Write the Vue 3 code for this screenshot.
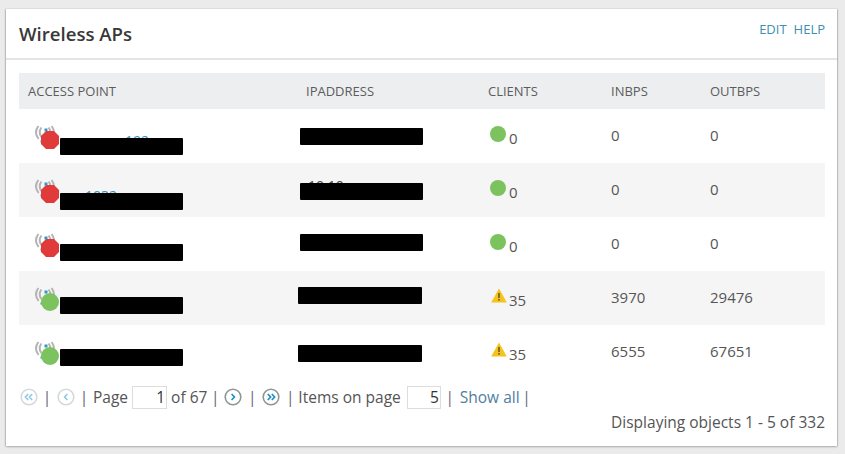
<script setup>
const rows = [
  { status: 'down', client: 'ok', clients: 0, inb: 0, outb: 0, alt: false, apTop: 29, ipTop: 19, ipLeft: -6, ipWidth: 123, apText: '192', apTextLeft: 65, ipText: '' },
  { status: 'down', client: 'ok', clients: 0, inb: 0, outb: 0, alt: true, apTop: 30, ipTop: 20, ipLeft: -6, ipWidth: 123, apText: '1032', apTextLeft: 25, ipText: '10.10' },
  { status: 'down', client: 'ok', clients: 0, inb: 0, outb: 0, alt: false, apTop: 27, ipTop: 17, ipLeft: -6, ipWidth: 123, apText: '', apTextLeft: 0, ipText: '' },
  { status: 'up', client: 'warn', clients: 35, inb: 3970, outb: 29476, alt: true, apTop: 26, ipTop: 16, ipLeft: -8, ipWidth: 124, apText: '', apTextLeft: 0, ipText: '' },
  { status: 'up', client: 'warn', clients: 35, inb: 6555, outb: 67651, alt: false, apTop: 24, ipTop: 20, ipLeft: -8, ipWidth: 124, apText: '', apTextLeft: 0, ipText: '' }
]
</script>

<template>
  <div class="page">
    <section class="card">
      <header class="head">
        <h1>Wireless APs</h1>
        <nav class="links"><a>EDIT</a><a>HELP</a></nav>
      </header>
      <div class="body">
        <div class="grid thead">
          <div>ACCESS POINT</div>
          <div>IPADDRESS</div>
          <div>CLIENTS</div>
          <div>INBPS</div>
          <div>OUTBPS</div>
        </div>
        <div v-for="(r, i) in rows" :key="i" class="grid row" :class="{ alt: r.alt }">
          <div class="cell ap">
            <svg class="apicon" width="24" height="25" viewBox="0 0 24 25">
              <rect x="9.5" y="3.5" width="3" height="3" fill="#2f97c9" />
              <rect x="5.5" y="15.5" width="2" height="2" fill="#2f97c9" />
              <g fill="none" stroke="#b4b4b4" stroke-width="2">
                <path d="M3.4 1 C0.4 5 0.4 10 3.6 14" />
                <path d="M6.4 2.5 C4.2 5.5 4.2 9 6.4 12" />
                <path d="M16.6 1 C19.6 5 19.6 10 16.4 14" />
                <path d="M13.6 2.5 C15.8 5.5 15.8 9 13.6 12" />
              </g>
              <polygon v-if="r.status === 'down'" points="11,6 19,6 24,11 24,19 19,24 11,24 6,19 6,11" fill="#e03a3a" />
              <circle v-else cx="15" cy="15" r="9" fill="#7cc35f" />
            </svg>
            <span v-if="r.apText" class="aptext" :style="{ left: r.apTextLeft + 32 + 'px', top: r.apTop - 5 + 'px' }">{{ r.apText }}</span>
            <span class="redact apbar" :style="{ top: r.apTop + 'px' }"></span>
          </div>
          <div class="cell ip">
            <span v-if="r.ipText" class="iptext" :style="{ top: r.ipTop - 5 + 'px' }">{{ r.ipText }}</span>
            <span class="redact" :style="{ top: r.ipTop + 'px', left: r.ipLeft + 'px', width: r.ipWidth + 'px' }"></span>
          </div>
          <div class="clients">
            <svg v-if="r.client === 'ok'" class="okicon" width="16" height="16" viewBox="0 0 16 16"><circle cx="8" cy="8" r="8" fill="#7cc35f" /></svg>
            <svg v-else class="warnicon" width="16" height="15" viewBox="0 0 16 15">
              <path d="M8 0.5 L15.8 14.5 H0.2 Z" fill="#f6c21c" />
              <rect x="7.2" y="5" width="1.6" height="5" fill="#6b5a1e" />
              <rect x="7.2" y="11" width="1.6" height="1.6" fill="#6b5a1e" />
            </svg>
            <span class="cnum">{{ r.clients }}</span>
          </div>
          <div class="cell">{{ r.inb }}</div>
          <div class="cell">{{ r.outb }}</div>
        </div>
        <div class="pager">
          <span class="pg"><svg width="18" height="18" viewBox="0 0 18 18"><circle cx="9" cy="9" r="7.8" fill="none" stroke="#d4d8da" stroke-width="1.6"/><path d="M8.2 6 L5.4 9 L8.2 12 M12.2 6 L9.4 9 L12.2 12" fill="none" stroke="#8fc9e2" stroke-width="1.6"/></svg></span>
          <span class="sep ml4 mr5">|</span>
          <span class="pg"><svg width="18" height="18" viewBox="0 0 18 18"><circle cx="9" cy="9" r="7.8" fill="none" stroke="#d4d8da" stroke-width="1.6"/><path d="M10.4 6 L7.6 9 L10.4 12" fill="none" stroke="#8fc9e2" stroke-width="1.6"/></svg></span>
          <span class="sep ml4 mr4">|</span>
          <span>Page</span>
          <span class="box">1</span>
          <span>of 67</span>
          <span class="sep ml3 mr4">|</span>
          <span class="pg"><svg width="18" height="18" viewBox="0 0 18 18"><circle cx="9" cy="9" r="7.8" fill="none" stroke="#8f9496" stroke-width="1.6"/><path d="M7.6 6 L10.4 9 L7.6 12" fill="none" stroke="#1f8fc0" stroke-width="1.7"/></svg></span>
          <span class="sep ml5 mr5">|</span>
          <span class="pg"><svg width="18" height="18" viewBox="0 0 18 18"><circle cx="9" cy="9" r="7.8" fill="none" stroke="#8f9496" stroke-width="1.6"/><path d="M5.8 6 L8.6 9 L5.8 12 M9.8 6 L12.6 9 L9.8 12" fill="none" stroke="#1f8fc0" stroke-width="1.7"/></svg></span>
          <span class="sep ml5 mr3">|</span>
          <span>Items on page</span>
          <span class="box items">5</span>
          <span class="sep ml4 mr5">|</span>
          <a class="showall">Show all</a>
          <span class="sep ml2">|</span>
        </div>
        <div class="count">Displaying objects 1 - 5 of 332</div>
      </div>
    </section>
  </div>
</template>

<style scoped>
.page {
  width: 845px;
  height: 454px;
  box-sizing: border-box;
  padding: 9px 8px 8px 6px;
  background: #ebebeb;
  font-family: "Open Sans", sans-serif;
  color: #555;
  font-size: 15px;
  overflow: hidden;
}
.card {
  height: 437px;
  box-sizing: border-box;
  background: #fff;
  box-shadow: 0 1px 2px rgba(0,0,0,.25), -1px 0 1px rgba(0,0,0,.12), 1px 0 1px rgba(0,0,0,.12);
}
.head {
  height: 51px;
  box-sizing: border-box;
  border-bottom: 2px solid #e4e4e4;
  display: flex;
  justify-content: space-between;
  padding: 0 12px 0 13px;
}
h1 {
  margin: 12px 0 0;
  font-size: 18.6px;
  line-height: 26px;
  font-weight: 600;
  color: #383838;
}
.links {
  display: flex;
  gap: 7px;
  margin-top: 12px;
  font-size: 13px;
  line-height: 16px;
  color: #3f8fae;
}
.body { padding: 13px 12px 0 13px; }
.grid {
  display: grid;
  grid-template-columns: 278px 182px 123px 99px 115px;
  padding-left: 9px;
}
.thead {
  height: 36px;
  align-items: center;
  background: #edeef0;
  font-size: 13px;
  color: #5c5c5c;
}
.row { height: 54px; }
.alt { background: #f5f5f5; }
.cell {
  position: relative;
  line-height: 52px;
}
.apicon {
  position: absolute;
  left: 7px;
  top: 16px;
}
.redact {
  position: absolute;
  background: #000;
  border-radius: 1px;
  height: 16.5px;
}
.apbar { left: 32px; width: 123px; }
.aptext {
  position: absolute;
  font-size: 14px;
  line-height: 16px;
  color: #3a8fb8;
}
.iptext {
  position: absolute;
  left: 2px;
  font-size: 14px;
  line-height: 16px;
  color: #444;
}
.clients {
  display: flex;
  align-items: flex-start;
  padding-top: 17px;
}
.okicon { flex: none; margin-left: 2px; }
.warnicon { flex: none; margin-left: 3px; }
.cnum { margin-left: 3px; line-height: 22px; margin-top: 1px; }
.warnicon + .cnum { margin-left: 2px; }
.pager {
  display: flex;
  align-items: center;
  height: 18px;
  margin-top: 9px;
  padding-left: 1px;
  font-size: 15.5px;
  line-height: 18px;
}
.pg { display: flex; }
.sep { width: 10px; text-align: center; color: #667; }
.ml2 { margin-left: 2px; }
.ml3 { margin-left: 3px; }
.ml4 { margin-left: 4px; }
.ml5 { margin-left: 5px; }
.mr3 { margin-right: 3px; }
.mr4 { margin-right: 4px; }
.mr5 { margin-right: 5px; }
.box {
  box-sizing: border-box;
  width: 35px;
  height: 23px;
  line-height: 21px;
  border: 1px solid #ddd;
  text-align: right;
  padding-right: 1px;
  margin: 0 4px;
  color: #333;
}
.items { width: 34px; margin-left: 6px; margin-right: 0; }
.showall { color: #4f7ea0; }
.count {
  text-align: right;
  margin-top: 6px;
  font-size: 15.5px;
  line-height: 20px;
}
</style>
